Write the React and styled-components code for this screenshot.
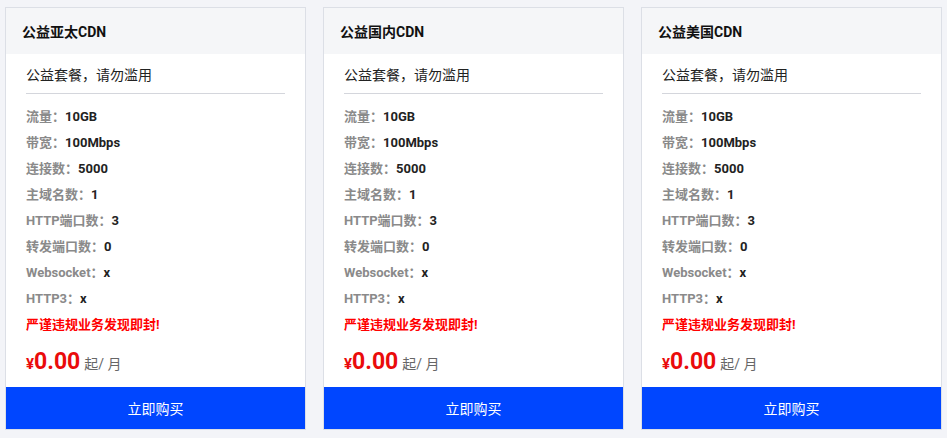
import React from "react";
import styled, { createGlobalStyle } from "styled-components";

const GlobalStyle = createGlobalStyle`
  html, body {
    margin: 0;
    padding: 0;
    background: #f3f4f8;
    font-family: Roboto, "Noto Sans CJK SC", sans-serif;
  }
`;

const Page = styled.div`
  display: grid;
  grid-template-columns: repeat(3, 301px);
  column-gap: 17px;
  padding: 7px 5px;
`;

const Card = styled.div`
  display: flex;
  flex-direction: column;
  background: #fff;
  border: 1px solid #dcdfe6;
`;

const Header = styled.div`
  height: 46px;
  display: flex;
  align-items: center;
  padding-left: 16px;
  background: #f5f6f8;
  font-size: 14px;
  font-weight: 700;
  color: #111;
`;

const Body = styled.div`
  padding: 10px 20px 0;
`;

const Subtitle = styled.div`
  font-size: 14px;
  line-height: 22px;
  color: #222;
  padding-bottom: 7px;
  border-bottom: 1px solid #d4d6dc;
  margin-bottom: 10px;
`;

const Row = styled.div`
  font-size: 13px;
  line-height: 26px;
  font-weight: 700;
  color: #222;
`;

const Label = styled.span`
  color: #8a8a8a;
`;

const Warning = styled(Row)`
  color: #f00;
`;

const PriceRow = styled.div`
  display: flex;
  align-items: baseline;
  height: 49px;
  padding-top: 8px;
  box-sizing: border-box;
  color: #ea0b0b;
`;

const Yen = styled.span`
  font-size: 15px;
  font-weight: 700;
`;

const Amount = styled.span`
  font-size: 23px;
  font-weight: 700;
  line-height: 32px;
`;

const Unit = styled.span`
  margin-left: 4px;
  font-size: 14px;
  color: #666;
`;

const BuyButton = styled.button`
  height: 42px;
  border: none;
  background: #0046ff;
  color: #fff;
  font-size: 14px;
  font-family: inherit;
  cursor: pointer;
`;

const plans = ["公益亚太CDN", "公益国内CDN", "公益美国CDN"];

const specs = [
  ["流量", "10GB"],
  ["带宽", "100Mbps"],
  ["连接数", "5000"],
  ["主域名数", "1"],
  ["HTTP端口数", "3"],
  ["转发端口数", "0"],
  ["Websocket", "x"],
  ["HTTP3", "x"],
];

function PlanCard({ title }) {
  return (
    <Card>
      <Header>{title}</Header>
      <Body>
        <Subtitle>公益套餐，请勿滥用</Subtitle>
        {specs.map(([k, v]) => (
          <Row key={k}>
            <Label>{k}：</Label>
            {v}
          </Row>
        ))}
        <Warning>严谨违规业务发现即封!</Warning>
        <PriceRow>
          <Yen>¥</Yen>
          <Amount>0.00</Amount>
          <Unit>起/ 月</Unit>
        </PriceRow>
      </Body>
      <BuyButton>立即购买</BuyButton>
    </Card>
  );
}

export default function App() {
  return (
    <>
      <GlobalStyle />
      <Page>
        {plans.map((p) => (
          <PlanCard key={p} title={p} />
        ))}
      </Page>
    </>
  );
}
